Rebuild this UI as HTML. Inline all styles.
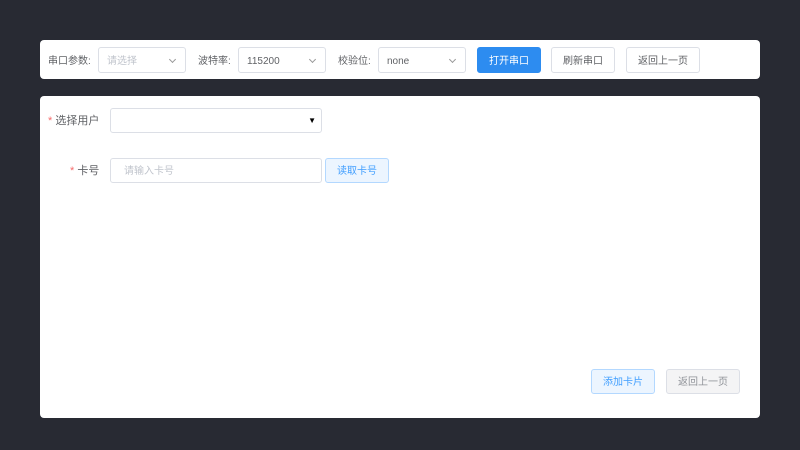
<!DOCTYPE html><html><head><meta charset="utf-8"><style>
body{margin:0;width:800px;height:450px;background:#282a33;font-family:"Liberation Sans","Noto Sans CJK SC",sans-serif;position:relative;overflow:hidden;}
.a{position:absolute;box-sizing:border-box;}
.card{background:#fff;border-radius:4px;}
.t{font-size:10px;color:#606266;line-height:12px;}
.sel,.btn{display:flex;align-items:center;font-size:10px;line-height:12px;padding-top:3px;}
.sel{border:1px solid #dcdfe6;border-radius:3px;background:#fff;padding-left:8px;color:#606266;}
.chev{position:absolute;right:10px;top:9px;width:4px;height:4px;border-right:1px solid #999;border-bottom:1px solid #999;transform:rotate(45deg);}
.btn{border:1px solid #dcdfe6;border-radius:3px;background:#fff;color:#606266;justify-content:center;}
</style></head><body>
<div class="a card" style="left:40px;top:40px;width:720px;height:39px"></div>
<div class="a t" style="left:48px;top:56px">串口参数:</div>
<div class="a sel" style="left:98px;top:47px;width:88px;height:26px;color:#c0c4cc">请选择<i class="chev"></i></div>
<div class="a t" style="left:198px;top:56px">波特率:</div>
<div class="a sel" style="left:238px;top:47px;width:88px;height:26px">115200<i class="chev"></i></div>
<div class="a t" style="left:338px;top:56px">校验位:</div>
<div class="a sel" style="left:378px;top:47px;width:88px;height:26px">none<i class="chev"></i></div>
<div class="a btn" style="left:477px;top:47px;width:64px;height:26px;background:#2d8cf0;border-color:#2d8cf0;color:#fff">打开串口</div>
<div class="a btn" style="left:551px;top:47px;width:64px;height:26px">刷新串口</div>
<div class="a btn" style="left:626px;top:47px;width:74px;height:26px">返回上一页</div>
<div class="a card" style="left:40px;top:96px;width:720px;height:322px"></div>
<div class="a t" style="left:48px;top:115px;font-size:11px"><span style="color:#f56c6c">*</span> 选择用户</div>
<div class="a sel" style="left:110px;top:108px;width:212px;height:25px"><span style="position:absolute;right:5px;top:6px;font-size:8px;color:#000">▼</span></div>
<div class="a t" style="left:70px;top:165px;font-size:11px"><span style="color:#f56c6c">*</span> 卡号</div>
<div class="a sel" style="left:110px;top:158px;width:212px;height:25px;padding-left:13px;color:#c0c4cc">请输入卡号</div>
<div class="a btn" style="left:325px;top:158px;width:64px;height:25px;background:#ecf5ff;border-color:#b3d8ff;color:#409eff">读取卡号</div>
<div class="a btn" style="left:591px;top:369px;width:64px;height:25px;background:#ecf5ff;border-color:#b3d8ff;color:#409eff">添加卡片</div>
<div class="a btn" style="left:666px;top:369px;width:74px;height:25px;background:#f4f4f5;color:#909399">返回上一页</div>
</body></html>
